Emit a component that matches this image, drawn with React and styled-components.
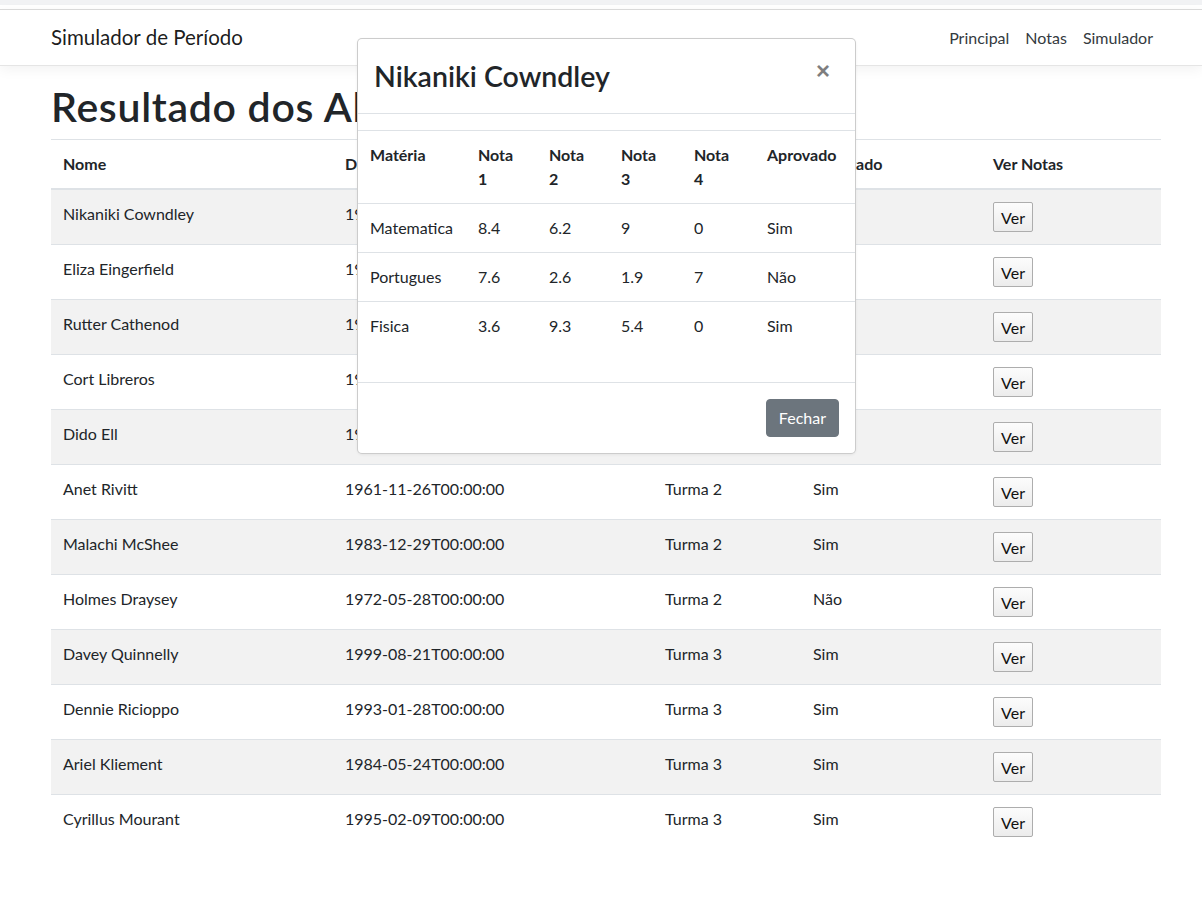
import React from 'react';
import styled, { createGlobalStyle } from 'styled-components';

const GlobalStyle = createGlobalStyle`
  body {
    margin: 0;
    font-family: "Segoe UI", Lato, "Liberation Sans", sans-serif;
    font-size: 16px;
    line-height: 1.5;
    color: #212529;
    background: #fff;
  }
  * { box-sizing: border-box; }
`;

const TopStrip = styled.div`
  height: 5px;
  background: #f1f2f4;
`;

const Navbar = styled.nav`
  margin-top: 4px;
  height: 57px;
  border-top: 1px solid #d9d9d9;
  border-bottom: 1px solid #e5e5e5;
  box-shadow: 0 4px 12px rgba(0, 0, 0, 0.05);
  background: #fff;
`;

const NavInner = styled.div`
  width: 1110px;
  margin-left: 51px;
  height: 100%;
  display: flex;
  align-items: center;
  justify-content: space-between;
`;

const Brand = styled.span`
  font-size: 20.5px;
  color: rgba(0, 0, 0, 0.9);
`;

const NavLinks = styled.ul`
  display: flex;
  list-style: none;
  margin: 0;
  padding: 0;
`;

const NavLink = styled.li`
  padding: 8px 8px;
  color: #343a40;
`;

const Container = styled.main`
  width: 1110px;
  margin-left: 51px;
`;

const Title = styled.h1`
  font-size: 41px;
  font-weight: 600;
  line-height: 48px;
  letter-spacing: 0.7px;
  margin: 17px 0 8px;
`;

const Table = styled.table`
  width: 100%;
  border-collapse: collapse;
  margin-bottom: 16px;
  table-layout: fixed;
`;

const Th = styled.th`
  text-align: left;
  padding: ${p => (p.$narrow ? '12px 17px 12px 12px' : '12px')};
  line-height: 24px;
  vertical-align: top;
  font-weight: 700;
  border-top: 1px solid #dee2e6;
  border-bottom: ${p => (p.$narrow ? '1px' : '2px')} solid #dee2e6;
  width: ${p => (p.$w ? `${p.$w}px` : 'auto')};
`;

const Row = styled.tr`
  background: ${p => (p.$striped ? '#f2f2f2' : 'transparent')};
`;

const Td = styled.td`
  padding: 12px;
  line-height: 24px;
  vertical-align: top;
  border-top: 1px solid #dee2e6;
`;

const VerButton = styled.button`
  height: 30px;
  width: 40px;
  padding: 0;
  font-family: inherit;
  font-size: 16px;
  color: #111;
  background: linear-gradient(#fcfcfc, #ececec);
  border: 1px solid #adadad;
  border-radius: 2px;
  vertical-align: top;
`;

const Modal = styled.div`
  position: absolute;
  left: 357px;
  top: 38px;
  width: 499px;
  background: #fff;
  border: 1px solid rgba(0, 0, 0, 0.2);
  border-radius: 5px;
  box-shadow: 0 1px 3px rgba(0, 0, 0, 0.06);
`;

const ModalHeader = styled.div`
  display: flex;
  align-items: flex-start;
  justify-content: space-between;
  padding: 16px;
  border-bottom: 1px solid #dee2e6;
`;

const ModalTitle = styled.h3`
  margin: 0;
  font-size: 28.5px;
  font-weight: 600;
  line-height: 42px;
`;

const Close = styled.span`
  font-size: 24px;
  font-weight: 700;
  line-height: 1;
  color: #000;
  opacity: 0.5;
  padding: 4px 9px 0 0;
  font-family: "Liberation Sans", Arial, sans-serif;
`;

const ModalBody = styled.div`
  padding: 16px 0;
`;

const ModalFooter = styled.div`
  display: flex;
  justify-content: flex-end;
  padding: 16px;
  border-top: 1px solid #dee2e6;
`;

const SecondaryButton = styled.button`
  font-family: inherit;
  font-size: 16px;
  line-height: 24px;
  padding: 6px 12px;
  color: #fff;
  background: #6c757d;
  border: 1px solid #6c757d;
  border-radius: 4px;
`;

const alunos = [
  ['Nikaniki Cowndley', '1990-03-14T00:00:00', 'Turma 1', 'Sim'],
  ['Eliza Eingerfield', '1987-07-02T00:00:00', 'Turma 1', 'Não'],
  ['Rutter Cathenod', '1995-10-11T00:00:00', 'Turma 1', 'Sim'],
  ['Cort Libreros', '1979-06-05T00:00:00', 'Turma 1', 'Sim'],
  ['Dido Ell', '1968-04-19T00:00:00', 'Turma 2', 'Não'],
  ['Anet Rivitt', '1961-11-26T00:00:00', 'Turma 2', 'Sim'],
  ['Malachi McShee', '1983-12-29T00:00:00', 'Turma 2', 'Sim'],
  ['Holmes Draysey', '1972-05-28T00:00:00', 'Turma 2', 'Não'],
  ['Davey Quinnelly', '1999-08-21T00:00:00', 'Turma 3', 'Sim'],
  ['Dennie Ricioppo', '1993-01-28T00:00:00', 'Turma 3', 'Sim'],
  ['Ariel Kliement', '1984-05-24T00:00:00', 'Turma 3', 'Sim'],
  ['Cyrillus Mourant', '1995-02-09T00:00:00', 'Turma 3', 'Sim'],
];

const notas = [
  ['Matematica', '8.4', '6.2', '9', '0', 'Sim'],
  ['Portugues', '7.6', '2.6', '1.9', '7', 'Não'],
  ['Fisica', '3.6', '9.3', '5.4', '0', 'Sim'],
];

const colunas = [
  ['Nome', 282],
  ['Data de Nascimento', 320],
  ['Turma', 148],
  ['Aprovado', 180],
  ['Ver Notas', 180],
];

const colunasNotas = [
  ['Matéria', 108],
  ['Nota 1', 71],
  ['Nota 2', 72],
  ['Nota 3', 73],
  ['Nota 4', 73],
  ['Aprovado', null],
];

export default function App() {
  return (
    <>
      <GlobalStyle />
      <TopStrip />
      <Navbar>
        <NavInner>
          <Brand>Simulador de Período</Brand>
          <NavLinks>
            <NavLink>Principal</NavLink>
            <NavLink>Notas</NavLink>
            <NavLink>Simulador</NavLink>
          </NavLinks>
        </NavInner>
      </Navbar>

      <Container>
        <Title>Resultado dos Alunos</Title>
        <Table>
          <thead>
            <tr>
              {colunas.map(([label, w]) => (
                <Th key={label} $w={w}>{label}</Th>
              ))}
            </tr>
          </thead>
          <tbody>
            {alunos.map((a, i) => (
              <Row key={a[0]} $striped={i % 2 === 0}>
                <Td>{a[0]}</Td>
                <Td>{a[1]}</Td>
                <Td>{a[2]}</Td>
                <Td>{a[3]}</Td>
                <Td><VerButton type="button">Ver</VerButton></Td>
              </Row>
            ))}
          </tbody>
        </Table>
      </Container>

      <Modal>
        <ModalHeader>
          <ModalTitle>Nikaniki Cowndley</ModalTitle>
          <Close>×</Close>
        </ModalHeader>
        <ModalBody>
          <Table>
            <thead>
              <tr>
                {colunasNotas.map(([label, w]) => (
                  <Th key={label} $w={w} $narrow>{label}</Th>
                ))}
              </tr>
            </thead>
            <tbody>
              {notas.map(n => (
                <tr key={n[0]}>
                  {n.map((v, j) => <Td key={j}>{v}</Td>)}
                </tr>
              ))}
            </tbody>
          </Table>
        </ModalBody>
        <ModalFooter>
          <SecondaryButton type="button">Fechar</SecondaryButton>
        </ModalFooter>
      </Modal>
    </>
  );
}
